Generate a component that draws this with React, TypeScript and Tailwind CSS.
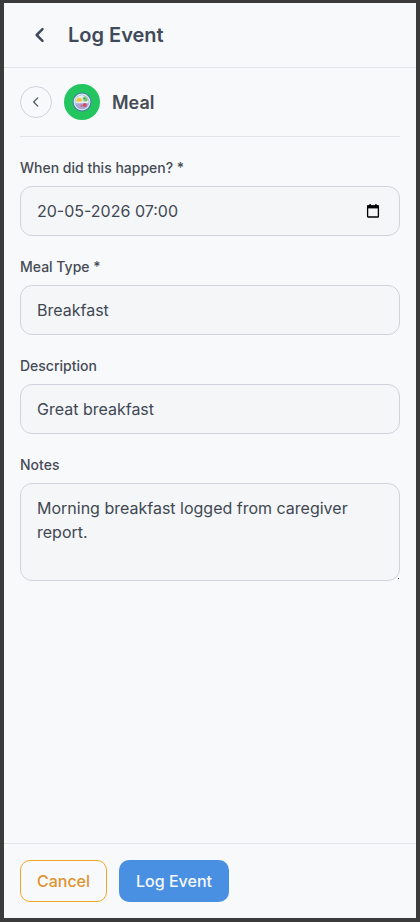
import React from "react";

const field = "block w-full h-[50px] rounded-[12px] border border-[#cfd3dc] bg-[#f5f6f8] px-4 text-[16px] text-[#404853] outline-none";
const label = "block text-[14px] leading-[20px] font-medium text-[#464b55] mb-2";

function Plate() {
  return (
    <svg width="20" height="20" viewBox="0 0 20 20">
      <circle cx="10" cy="10" r="9" fill="#dfeaf5" stroke="#4a7aa8" strokeWidth="1.1" />
      <circle cx="10" cy="10" r="7" fill="#e6edf5" stroke="#8fb0cf" strokeWidth="0.6" />
      <path d="M3.4 11.2 C3.6 14.6 6.4 17 10 17 C13.6 17 16.4 14.6 16.6 11.2 Z" fill="#a9a8d0" />
      <path d="M4 9.6 C4.4 7.4 5.8 6 7.2 5.8 C8.6 6 10 7.4 10.2 9.6 Z" fill="#f2c230" />
      <circle cx="13.2" cy="7" r="2.8" fill="#9ed49c" />
      <circle cx="12.6" cy="6.4" r="1.1" fill="#4f9f5e" />
      <circle cx="14.2" cy="8" r="0.9" fill="#5fb36c" />
      <circle cx="12.8" cy="13" r="1.9" fill="#d9476c" />
      <circle cx="9.6" cy="13.8" r="1.2" fill="#d9688a" />
    </svg>
  );
}

export default function App() {
  return (
    <div className="h-[922px] w-[420px] border-x-4 border-t-[3px] border-b-4 border-[#3b3b3b] bg-[#f8f9fb] flex flex-col font-['Inter',sans-serif]">
      <header className="h-[65px] shrink-0 flex items-center border-b border-[#e2e4e9] pl-[26px]">
        <svg width="20" height="20" viewBox="0 0 24 24" fill="none" stroke="#3f4a5a" strokeWidth="3" strokeLinecap="round" strokeLinejoin="round">
          <path d="M15 5l-7 7 7 7" />
        </svg>
        <h1 className="ml-[18px] text-[20px] leading-[28px] font-semibold text-[#3f4a5a]">Log Event</h1>
      </header>

      <main className="flex-1 px-4">
        <div className="h-[69px] flex items-center border-b border-[#e2e4e9]">
          <button className="w-8 h-8 rounded-full border border-[#cfd3da] flex items-center justify-center">
            <svg width="14" height="14" viewBox="0 0 24 24" fill="none" stroke="#4b5563" strokeWidth="2.2" strokeLinecap="round" strokeLinejoin="round">
              <path d="M15 5l-7 7 7 7" />
            </svg>
          </button>
          <div className="ml-3 w-9 h-9 rounded-full bg-[#22c55e] flex items-center justify-center">
            <Plate />
          </div>
          <span className="ml-3 mt-[2px] text-[18px] leading-[28px] font-semibold text-[#464b55]">Meal</span>
        </div>

        <div className="pt-[21px] flex flex-col gap-[21px]">
          <div>
            <label className={label}>When did this happen? *</label>
            <div className={field + " flex items-center justify-between pr-[19px]"}>
              <span>20-05-2026 07:00</span>
              <svg width="14" height="16" viewBox="0 0 14 16" fill="none">
                <rect x="1.6" y="3" width="10.8" height="11" rx="0.6" stroke="#000" strokeWidth="1.3" />
                <rect x="1" y="2.4" width="12" height="3" fill="#000" />
                <rect x="3.4" y="1" width="1.4" height="2" fill="#000" />
                <rect x="9.2" y="1" width="1.4" height="2" fill="#000" />
              </svg>
            </div>
          </div>
          <div>
            <label className={label}>Meal Type *</label>
            <input className={field} readOnly defaultValue="Breakfast" />
          </div>
          <div>
            <label className={label}>Description</label>
            <input className={field} readOnly defaultValue="Great breakfast" />
          </div>
          <div>
            <label className={label}>Notes</label>
            <div className="relative">
              <textarea
                className="block w-full h-[98px] resize-none rounded-[12px] border border-[#cfd3dc] bg-[#f5f6f8] px-4 py-[12px] text-[16px] leading-[24px] text-[#404853] outline-none"
                readOnly
                defaultValue="Morning breakfast logged from caregiver report."
              />
              <span className="absolute right-[1px] bottom-[2px] w-px h-px bg-[#333]" />
            </div>
          </div>
        </div>
      </main>

      <footer className="h-[75px] shrink-0 border-t border-[#e2e4e9] px-4 flex items-center gap-3">
        <button className="w-[87px] h-[42px] rounded-[10px] border border-[#f5a524] text-[16px] font-medium text-[#dd9431]">Cancel</button>
        <button className="w-[110px] h-[42px] rounded-[10px] bg-[#4a90e2] text-[16px] font-medium text-[#f5f8fd]">Log Event</button>
      </footer>
    </div>
  );
}
